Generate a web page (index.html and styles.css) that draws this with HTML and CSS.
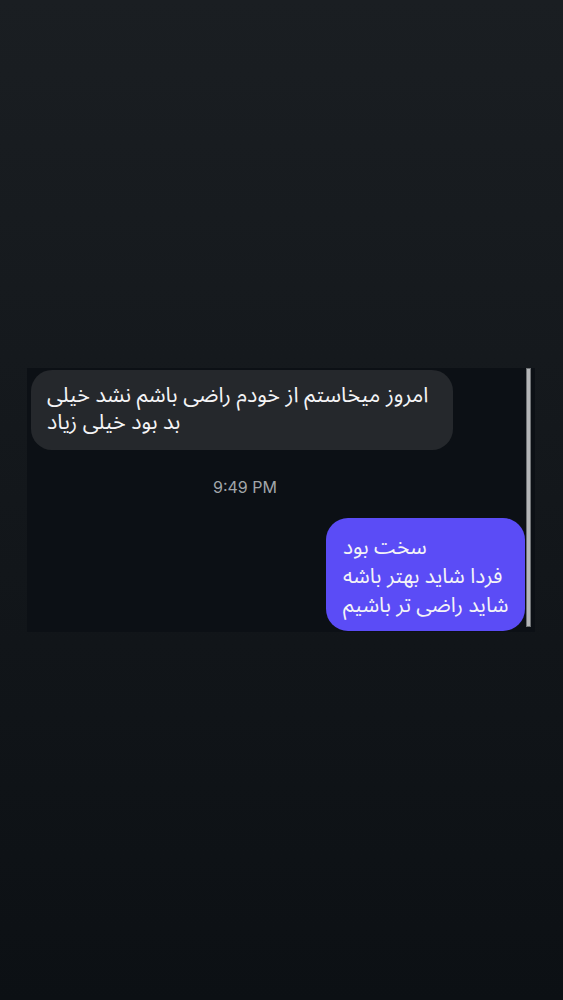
FILE: index.html
```html
<!DOCTYPE html>
<html lang="fa">
<head>
<meta charset="utf-8">
<title>گفتگو</title>
<link rel="stylesheet" href="styles.css">
</head>
<body>
<div class="thread">
	<div class="msg msg-in" dir="rtl">امروز میخاستم از خودم راضی باشم نشد خیلی<br>بد بود خیلی زیاد</div>
	<div class="stamp">9:49 PM</div>
	<div class="msg msg-out" dir="rtl">سخت بود<br>فردا شاید بهتر باشه<br>شاید راضی تر باشیم</div>
	<div class="scrollbar"></div>
</div>
</body>
</html>
```

FILE: styles.css
```css
* {
	padding:0;
	margin:0;
	box-sizing:border-box;
}
html, body {
	height:100%;
}
body {
	background:linear-gradient(#1a1e22, #0c1014);
	padding-top:368px;
	padding-left:27px;
}
.thread {
	position:relative;
	width:508px;
	height:264px;
	background:#0c1015;
	display:flex;
	flex-direction:column;
	padding:2px 10px 0 4px;
}
.msg {
	font-family:"Noto Sans Arabic", "DejaVu Sans", sans-serif;
	text-align:left;
	color:#f4f4f6;
	white-space:nowrap;
}
.msg-in {
	width:422px;
	height:80px;
	background:#25282c;
	border-radius:21px;
	font-size:21.5px;
	line-height:27px;
	padding:12px 16px 0 16px;
}
.stamp {
	font-family:Inter, "Liberation Sans", sans-serif;
	font-size:16px;
	color:#a2a6aa;
	padding:27px 0 0 182px;
	height:68px;
}
.msg-out {
	align-self:flex-end;
	width:199px;
	height:113px;
	background:#5b4cf6;
	border-radius:22px;
	font-size:21px;
	line-height:29px;
	padding:15px 12px 0 17px;
}
/* thin scroll thumb on the right edge */
.scrollbar {
	position:absolute;
	top:0;
	right:4px;
	width:5px;
	height:259px;
	background:#b4b6b8;
	border:1px solid #6e7174;
}
```
